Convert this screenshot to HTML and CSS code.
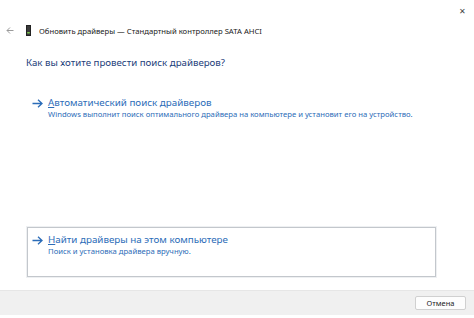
FILE: index.html
```html
<!DOCTYPE html>
<html>

<head>
    <title>Обновить драйверы</title>
    <link rel="stylesheet" href="styles.css">
</head>

<body>

<div class="window">

    <div class="titlebar">
        <span class="close">&#x2715;</span>
    </div> <!-- titlebar -->

    <div class="header">
        <svg class="back" width="8" height="7" viewBox="0 0 8 7">
            <path d="M7.5 3.5H1 M4 0.5L1 3.5L4 6.5" fill="none" stroke="#9a9a9a" stroke-width="1"/>
        </svg>
        <svg class="device" width="5" height="11" viewBox="0 0 5 11">
            <rect x="0.5" y="0.5" width="4" height="10" fill="#3a3a3a" stroke="#222"/>
            <rect x="1.2" y="7" width="2.6" height="1.5" fill="#7ec850"/>
        </svg>
        <span class="wintitle">Обновить драйверы — Стандартный контроллер SATA AHCI</span>
    </div> <!-- header -->

    <div class="content">
        <div class="question">Как вы хотите провести поиск драйверов?</div>

        <div class="option first">
            <svg class="arrow" width="11" height="9" viewBox="0 0 11 9">
                <path d="M0.5 4.5H10 M6 0.8L10 4.5L6 8.2" fill="none" stroke="#2b6cb8" stroke-width="1.3"/>
            </svg>
            <div class="option-text">
                <div class="option-title"><u>А</u>втоматический поиск драйверов</div>
                <div class="option-desc">Windows выполнит поиск оптимального драйвера на компьютере и установит его на устройство.</div>
            </div>
        </div> <!-- option 1 -->

        <div class="option boxed">
            <svg class="arrow" width="11" height="9" viewBox="0 0 11 9">
                <path d="M0.5 4.5H10 M6 0.8L10 4.5L6 8.2" fill="none" stroke="#2b6cb8" stroke-width="1.3"/>
            </svg>
            <div class="option-text">
                <div class="option-title"><u>Н</u>айти драйверы на этом компьютере</div>
                <div class="option-desc">Поиск и установка драйвера вручную.</div>
            </div>
        </div> <!-- option 2 -->
    </div> <!-- content -->

    <div class="footer">
        <button class="cancel">Отмена</button>
    </div> <!-- footer -->

</div> <!-- window -->

</body>

</html>
```

FILE: styles.css
```css
body {
    margin: 0;
    background-color: #ffffff;
    font-family: "Noto Sans", "Open Sans", sans-serif;
    overflow: hidden;
}

.window {
    width: 474px;
    height: 315px;
    display: flex;
    flex-direction: column;
}

.titlebar {
    height: 20px;
    display: flex;
    justify-content: flex-end;
    align-items: center;
}

.close {
    font-size: 8px;
    color: #444444;
    margin-right: 8px;
}

.header {
    height: 21px;
    display: flex;
    align-items: center;
    padding-left: 6px;
}

.back {
    margin-right: 12px;
}

.device {
    margin-right: 8px;
}

.wintitle {
    font-size: 7.7px;
    color: #1a1a1a;
}

.content {
    flex: 1;
    padding-left: 26px;
    padding-right: 38px;
}

.question {
    font-size: 9.7px;
    color: #1c3d7a;
    margin-top: 15px;
}

.option {
    display: flex;
    align-items: flex-start;
    color: #2b6cb8;
}

.option.first {
    margin-top: 27px;
    padding-left: 6px;
}

.option.boxed {
    margin-top: 107px;
    margin-left: 1px;
    border: 1px solid #c3c7cc;
    box-shadow: 0 0 0 1px #eef0f2;
    padding-left: 4px;
    padding-top: 5px;
    box-sizing: border-box;
    height: 50px;
}

.arrow {
    margin-top: 3px;
    margin-right: 5px;
}

.option-title {
    font-size: 9.8px;
    line-height: 13px;
}

.option-title u {
    text-underline-offset: 1px;
    text-decoration-thickness: 1px;
}

.option-desc {
    font-size: 7.7px;
    line-height: 11px;
    color: #2b6cb8;
}

.footer {
    height: 24px;
    background-color: #f0f0f0;
    border-top: 1px solid #e6e6e6;
    display: flex;
    justify-content: flex-end;
    align-items: center;
    padding-right: 8px;
}

.cancel {
    width: 51px;
    height: 14px;
    font-family: "Noto Sans", "Open Sans", sans-serif;
    font-size: 7.5px;
    color: #1a1a1a;
    background-color: #fdfdfd;
    border: 1px solid #d0d0d0;
    border-radius: 2px;
    padding: 0;
}
```
